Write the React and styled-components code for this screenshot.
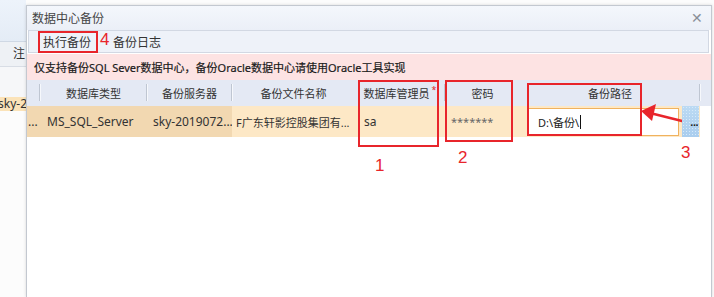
import React from 'react'
import styled, { createGlobalStyle } from 'styled-components';

const GlobalStyle = createGlobalStyle`
 html, body {
  margin: 0;
  padding: 0;
  background: #ffffff;
 }
 body {
  font-family: "Noto Sans", "Noto Sans CJK SC", sans-serif;
  color: #333;
 }
`;

const Desktop = styled.div`
 position: relative;
 display: flex;
 width: 714px;
 height: 297px;
 overflow: hidden;
 background: #fcfcfc;
`;

const BackApp = styled.div`
 width: 26px;
 display: flex;
 flex-direction: column;
 flex-shrink: 0;
 overflow: hidden;
`;

const BackTop = styled.div`
 height: 41px;
 background: linear-gradient(#edf3fb, #e4ecf6);
 border-bottom: 1px solid #cfd8e4;
`;

const BackTabs = styled.div`
 height: 24px;
 background: #eef1f5;
 border-bottom: 1px solid #d8dde5;
 font-size: 12px;
 line-height: 24px;
 padding-left: 13px;
 color: #333;
`;

const BackGap = styled.div`
 height: 30px;
 background: #f6f7f9;
`;

const BackRow = styled.div`
 height: 14px;
 background: #fbe3b9;
 font-size: 12px;
 line-height: 13px;
 white-space: nowrap;
 margin-left: -2px;
`;

const Dialog = styled.div`
 margin-top: 5px;
 width: 684px;
 border: 1px solid #c3c8d0;
 border-bottom: none;
 box-shadow: 0 0 3px rgba(0,0,0,0.15);
 background: #ffffff;
 display: flex;
 flex-direction: column;
`;

const TitleBar = styled.div`
 height: 24px;
 display: flex;
 align-items: center;
 justify-content: space-between;
 padding: 0 8px 0 5px;
 background: linear-gradient(#f4f7fc, #ebeff7);
 font-size: 12px;
 color: #444;
`;

const Close = styled.span`
 font-size: 14px;
 color: #8a8f98;
 line-height: 1;
`;

const Toolbar = styled.div`
 height: 21px;
 margin: 0 2px 0 1px;
 display: flex;
 align-items: center;
 gap: 22px;
 padding-left: 14px;
 background: #eef2f9;
 border: 1px solid #d2d8e3;
 font-size: 12px;
 color: #333;
`;

const ToolButton = styled.span`
 white-space: nowrap;
`;

const Notice = styled.div`
 height: 26px;
 margin-top: 1px;
 display: flex;
 align-items: center;
 padding-left: 7px;
 background: #fde3e3;
 font-size: 11px;
 color: #1a1a1a;
 -webkit-text-stroke: 0.2px #1a1a1a;
 white-space: nowrap;
`;

const columns = '13px 107px 85px 123px 90px 75px 180px 1fr';

const HeaderRow = styled.div`
 display: grid;
 grid-template-columns: ${columns};
 height: 26px;
 background: #e4e9f4;
 font-size: 11px;
 color: #333;
`;

const HeaderCell = styled.div`
 position: relative;
 display: flex;
 align-items: center;
 justify-content: center;
 white-space: nowrap;
 &::after {
  content: '';
  display: ${({ $sep }) => ($sep ? 'block' : 'none')};
  position: absolute;
  right: 0;
  top: 4px;
  bottom: 5px;
  width: 1px;
  background: #bfc6d2;
  box-shadow: 1px 0 0 #f6f8fc;
 }
`;

const Star = styled.sup`
 color: #e02020;
 font-size: 9px;
 margin-left: 2px;
 align-self: flex-start;
 margin-top: 3px;
`;

const DataRow = styled.div`
 display: grid;
 grid-template-columns: ${columns};
 height: 31px;
 font-size: 12px;
 color: #333;
`;

const Cell = styled.div`
 display: flex;
 align-items: center;
 padding-left: ${({ $pad }) => $pad ?? 5}px;
 font-size: ${({ $small }) => ($small ? 11 : 12)}px;
 color: ${({ $muted }) => ($muted ? '#666' : '#333')};
 background: ${({ $dark, $blank }) => ($blank ? '#ffffff' : $dark ? '#f2d8b1' : '#fde8c6')};
 white-space: nowrap;
 overflow: hidden;
`;

const PathInput = styled.div`
 width: 140px;
 height: 26px;
 margin-top: 1px;
 flex-shrink: 0;
 display: flex;
 align-items: center;
 padding-left: 10px;
 background: #ffffff;
 border: 1px solid #f0b25e;
 font-size: 11px;
 color: #222;
`;

const Caret = styled.span`
 display: inline-block;
 width: 1px;
 height: 14px;
 background: #111;
 margin-left: 1px;
`;

const PickButton = styled.div`
 position: relative;
 z-index: 2;
 width: 17px;
 height: 31px;
 margin-left: 3px;
 flex-shrink: 0;
 display: flex;
 align-items: center;
 justify-content: flex-end;
 padding-right: 1px;
 box-sizing: border-box;
 background: radial-gradient(#d6eafa 1px, transparent 1px) 0 0 / 3px 3px, linear-gradient(#bcdaf3, #a9cdee);
 font-family: "Liberation Sans", sans-serif;
 font-size: 11px;
 font-weight: 700;
 letter-spacing: -0.5px;
 color: #222;
`;

const Body = styled.div`
 flex: 1;
 background: #ffffff;
`;

const Mark = styled.div`
 position: absolute;
 left: ${({ $x }) => $x}px;
 top: ${({ $y }) => $y}px;
 width: ${({ $w }) => $w}px;
 height: ${({ $h }) => $h}px;
 border: 2px solid #e8252b;
 box-sizing: border-box;
`;

const Num = styled.span`
 position: absolute;
 left: ${({ $x }) => $x}px;
 top: ${({ $y }) => $y}px;
 font-family: "Liberation Sans", sans-serif;
 font-size: 17px;
 color: #e8252b;
 line-height: 1;
`;

const Arrow = styled.svg`
 position: absolute;
 left: 638px;
 top: 102px;
 z-index: 1;
`;

const App = () => {
  return (
    <>
      <GlobalStyle />
      <Desktop>
        <BackApp>
          <BackTop />
          <BackTabs>注</BackTabs>
          <BackGap />
          <BackRow>sky-2</BackRow>
        </BackApp>
        <Dialog>
          <TitleBar>
            <span>数据中心备份</span>
            <Close>✕</Close>
          </TitleBar>
          <Toolbar>
            <ToolButton>执行备份</ToolButton>
            <ToolButton>备份日志</ToolButton>
          </Toolbar>
          <Notice>仅支持备份SQL Sever数据中心，备份Oracle数据中心请使用Oracle工具实现</Notice>
          <HeaderRow>
            <HeaderCell $sep />
            <HeaderCell $sep>数据库类型</HeaderCell>
            <HeaderCell $sep>备份服务器</HeaderCell>
            <HeaderCell>备份文件名称</HeaderCell>
            <HeaderCell $sep>数据库管理员<Star>*</Star></HeaderCell>
            <HeaderCell>密码</HeaderCell>
            <HeaderCell $sep>备份路径</HeaderCell>
            <HeaderCell />
          </HeaderRow>
          <DataRow>
            <Cell $dark $pad={1}>...</Cell>
            <Cell $dark $pad={7}>MS_SQL_Server</Cell>
            <Cell $dark $pad={6}>sky-2019072...</Cell>
            <Cell $pad={4} $small>F广东轩影控股集团有...</Cell>
            <Cell $pad={9}>sa</Cell>
            <Cell $pad={6} $small $muted>*******</Cell>
            <Cell $pad={7}>
              <PathInput>D:\备份\<Caret /></PathInput>
              <PickButton>...</PickButton>
            </Cell>
            <Cell $blank />
          </DataRow>
          <Body />
        </Dialog>

        <Mark $x={38} $y={31} $w={60} $h={22} />
        <Num $x={100} $y={31}>4</Num>
        <Mark $x={358} $y={80} $w={81} $h={67} />
        <Num $x={375} $y={157}>1</Num>
        <Mark $x={445} $y={80} $w={68} $h={62} />
        <Num $x={458} $y={149}>2</Num>
        <Mark $x={527} $y={83} $w={115} $h={53} />
        <Num $x={681} $y={144}>3</Num>
        <Arrow width="58" height="26" viewBox="0 0 58 26">
          <line x1="12" y1="11" x2="52" y2="21" stroke="#e8252b" strokeWidth="2.5" strokeLinecap="round" />
          <polygon points="3,9 18,2 14,19" fill="#e8252b" />
        </Arrow>
      </Desktop>
    </>
  )
}

export default App
